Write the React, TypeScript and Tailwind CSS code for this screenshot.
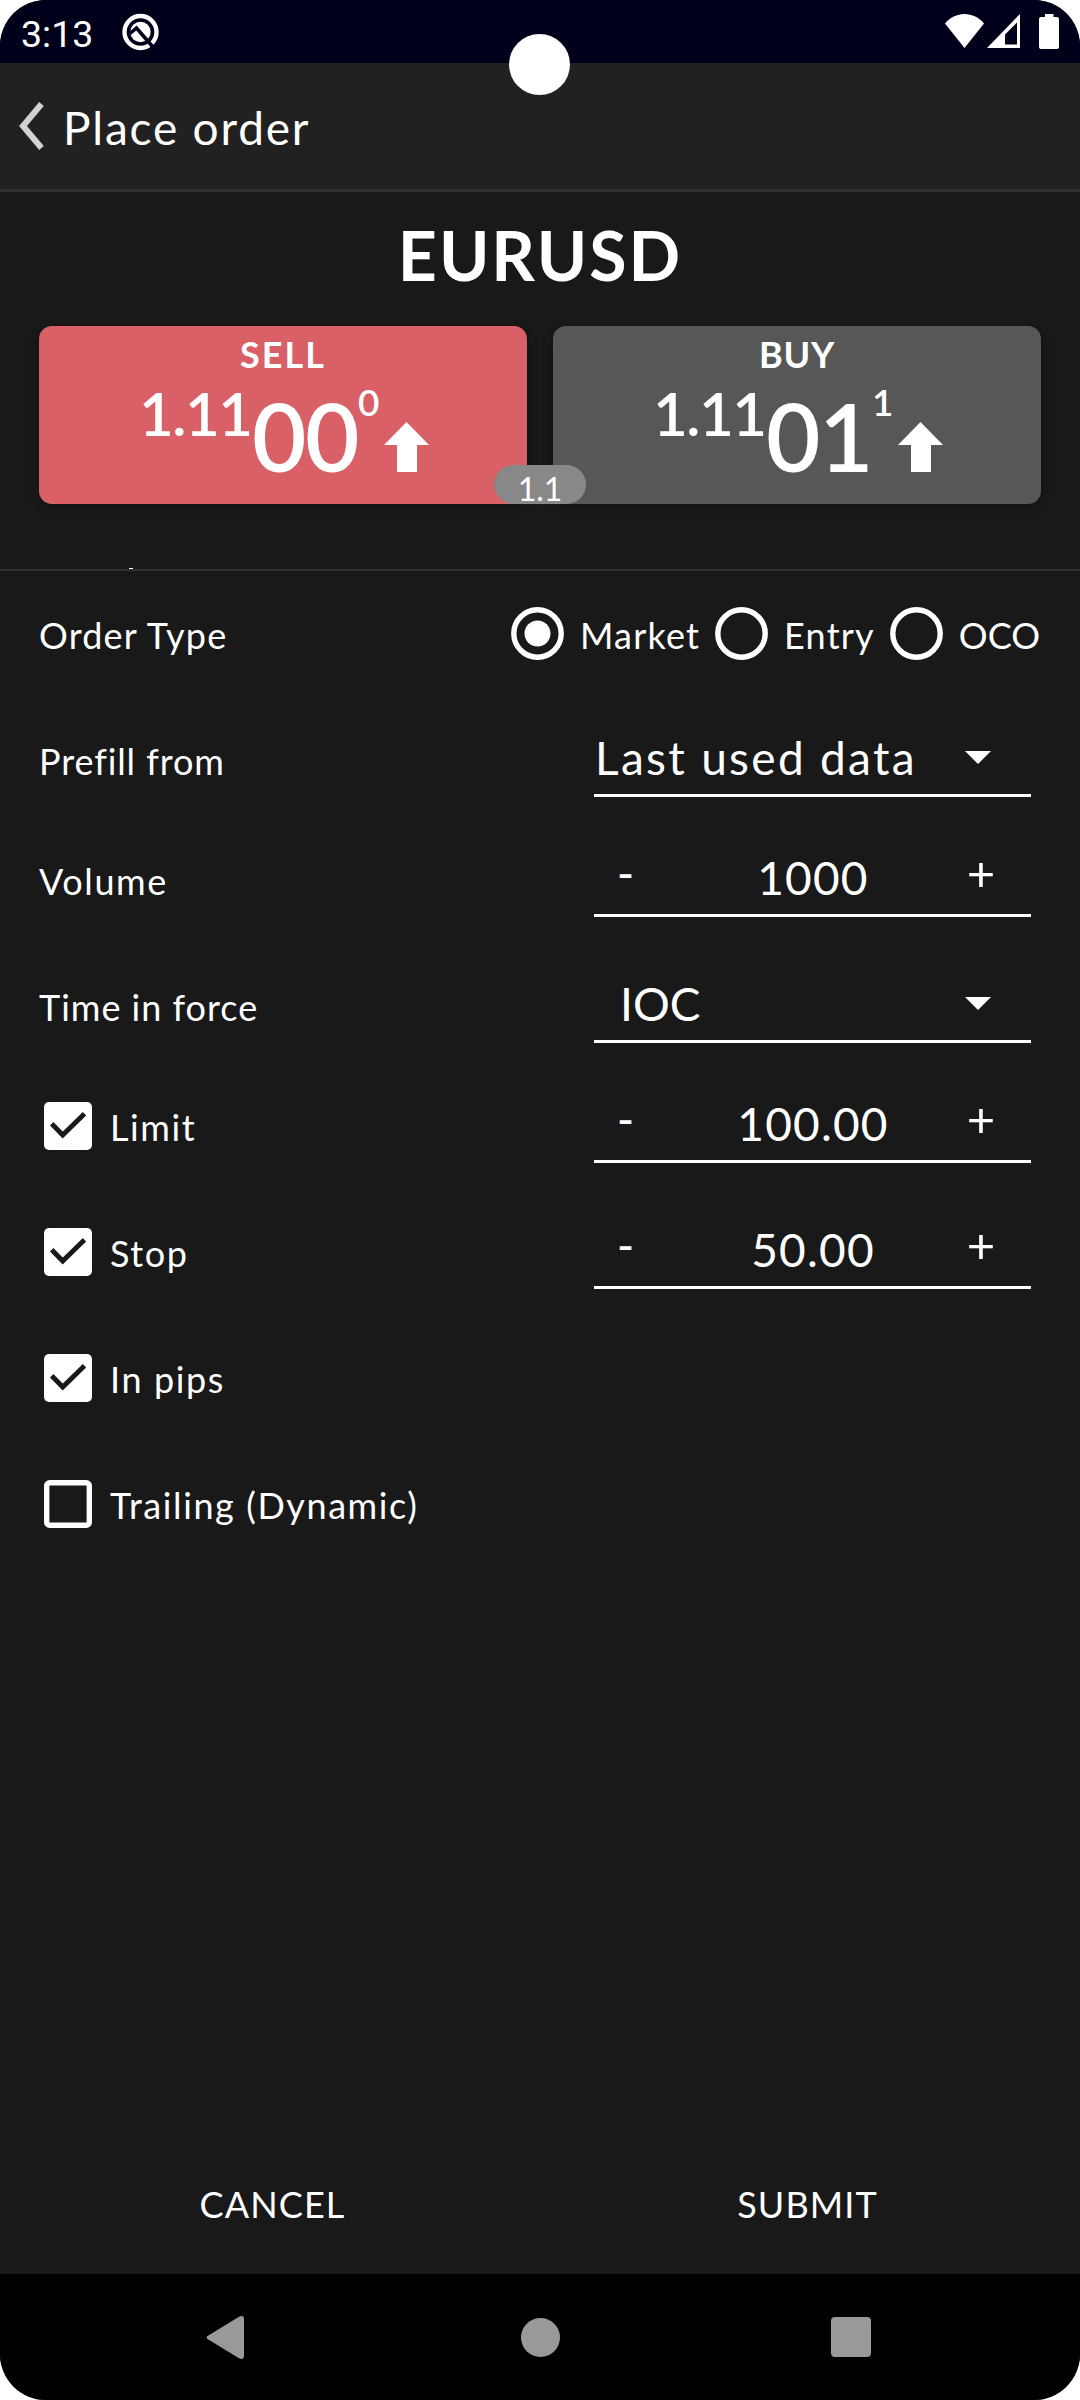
import { useState, type ReactNode } from "react";

function StatusBar() {
  return (
    <div className="flex h-[63px] shrink-0 items-start bg-[#00001a] pl-[21px] pr-[21px]">
      <span className="mt-[12px] w-[101px] font-[Roboto] text-[37.5px] leading-[44px]">
        3:13
      </span>
      <svg className="mt-[13px]" width="37" height="38" viewBox="0 0 37 38" fill="none" aria-hidden>
        <circle cx="18.5" cy="19" r="16" stroke="white" strokeWidth="4.4" />
        <circle cx="18.5" cy="19" r="10.2" fill="white" />
        <path d="M8 20.5 14.5 15 30.5 33.5" stroke="#00001a" strokeWidth="3.6" />
      </svg>
      <div className="ml-auto mt-[14px] flex items-start">
        <svg width="39" height="34" viewBox="0 0 39 34" fill="white" aria-hidden>
          <path d="M19.5 34 0 9.5C5 3.5 12 0 19.5 0S34 3.5 39 9.5Z" />
        </svg>
        <svg className="ml-[3px]" width="33" height="34" viewBox="0 0 33 34" aria-hidden>
          <path fill="white" fillRule="evenodd" d="M0 34 33 0v34H0Zm18-3.5h12V8.5L18 20.5Z" />
        </svg>
        <svg className="ml-[19px]" width="20" height="35" viewBox="0 0 20 35" fill="white" aria-hidden>
          <path d="M6 0h8.5v3H18a2 2 0 0 1 2 2v28a2 2 0 0 1-2 2H2a2 2 0 0 1-2-2V5a2 2 0 0 1 2-2h4Z" />
        </svg>
      </div>
    </div>
  );
}

function Header() {
  return (
    <header className="flex h-[129px] shrink-0 items-center border-b-[3px] border-[#303030] bg-[#212121] pl-[18px]">
      <svg width="27" height="48" viewBox="0 0 27 48" fill="none" aria-label="Back">
        <path d="M23.5 2 5 24l18.500 22" stroke="#d2d2d2" strokeWidth="6" />
      </svg>
      <h1 className="ml-[18px] mt-1 text-[46px] leading-[56px] tracking-[1.8px]">
        Place order
      </h1>
    </header>
  );
}

function PriceButton({
  side,
  pips,
  point,
  className,
}: {
  side: ReactNode;
  pips: string;
  point: string;
  className: string;
}) {
  return (
    <button
      type="button"
      className={`flex h-[178px] w-[488px] flex-col items-center rounded-[13px] pt-[6px] font-semibold shadow-[0_2px_10px_rgba(0,0,0,0.35)] ${className}`}
    >
      <span className="text-[36px] font-bold leading-[44px]">{side}</span>
      <span className="flex h-[100px] items-start self-start pl-[100px] text-left">
        <span className="mt-[1px] w-[113px] text-[60px] leading-[72px] tracking-[-1.5px]">1.11</span>
        <span className="mt-[4px] w-[106px] text-[94px] leading-[112px] tracking-[-1.5px]">{pips}</span>
        <span className="mt-[4px] w-[26px] text-[37px] leading-[44px]">{point}</span>
        <svg className="mt-[46px]" width="45" height="50" viewBox="0 0 45 50" fill="white" aria-hidden>
          <path d="M22.5 0 45 23H33v27H13V23H0Z" />
        </svg>
      </span>
    </button>
  );
}

function Radio({
  label,
  checked,
  onSelect,
}: {
  label: string;
  checked: boolean;
  onSelect: () => void;
}) {
  return (
    <button type="button" role="radio" aria-checked={checked} onClick={onSelect} className="flex items-center">
      <svg className="-mt-[3px]" width="53" height="53" viewBox="0 0 53 53" aria-hidden>
        <circle cx="26.5" cy="26.5" r="23.7" fill="none" stroke="white" strokeWidth="5.4" />
        {checked ? <circle cx="26.5" cy="26.5" r="13" fill="white" /> : null}
      </svg>
      <span className={`ml-[16px] ${label === "OCO" ? "" : "tracking-[1.2px]"}`}>{label}</span>
    </button>
  );
}

function Checkbox({ label, initial }: { label: string; initial: boolean }) {
  const [checked, setChecked] = useState(initial);
  return (
    <button
      type="button"
      role="checkbox"
      aria-checked={checked}
      onClick={() => setChecked((value) => !value)}
      className="ml-[5px] flex items-center"
    >
      <svg className="-mt-[2px]" width="48" height="48" viewBox="0 0 48 48" fill="none" aria-hidden>
        {checked ? (
          <>
            <rect width="48" height="48" rx="5" fill="white" />
            <path d="m7.7 21.8 11 11.2L40.5 11.7" stroke="#191919" strokeWidth="4.8" />
          </>
        ) : (
          <rect x="2.7" y="2.7" width="42.6" height="42.6" rx="3" stroke="white" strokeWidth="5.4" />
        )}
      </svg>
      <span className="ml-[18px] tracking-[1.6px]">{label}</span>
    </button>
  );
}

function Row({
  label,
  spaced = false,
  children,
}: {
  label: ReactNode;
  spaced?: boolean;
  children?: ReactNode;
}) {
  return (
    <div className={`flex h-[120px] items-center justify-between pl-[39px] ${spaced ? "mb-[6px]" : ""}`}>
      {label}
      {children}
    </div>
  );
}

const field =
  "mr-[49px] flex h-[96px] w-[437px] items-center self-start border-b-[3px] border-white pt-[19px] text-[46px] leading-[56px]";

function SelectField({ value, className }: { value: string; className: string }) {
  return (
    <div className={`${field} justify-between pr-[40px] ${className}`}>
      <span className="mt-[2px]">{value}</span>
      <svg width="26" height="13" viewBox="0 0 26 13" fill="white" aria-hidden>
        <path d="M0 0h26L13 13Z" />
      </svg>
    </div>
  );
}

function StepperField({ value }: { value: string }) {
  return (
    <div className={field}>
      <button type="button" className="-mt-2 w-[63px] text-center font-medium">-</button>
      <span className="mt-[2px] w-[312px] text-center tracking-[1.2px]">{value}</span>
      <button type="button" className="-mt-[11px] w-[24px] text-[49px]">
        <span className="-mx-3">+</span>
      </button>
    </div>
  );
}

export default function App() {
  const [orderType, setOrderType] = useState("Market");

  return (
    <div className="h-[2400px] w-[1080px] bg-white">
      <div className="relative flex h-full flex-col overflow-hidden rounded-[46px] bg-[#191919] font-[Lato,sans-serif] text-white">
        <StatusBar />
        <Header />
        {/* camera cutout */}
        <div className="absolute left-[509px] top-[34px] size-[61px] rounded-full bg-white" />

        <section className="relative flex h-[379px] shrink-0 flex-col border-b-2 border-[#303030]">
          <h2 className="mt-[22px] h-[112px] text-center text-[68px] font-bold leading-[82px] tracking-[2px]">
            EURUSD
          </h2>
          <div className="relative flex justify-between px-[39px]">
            <PriceButton
              side={<span className="tracking-[2px]">SELL</span>}
              pips="00"
              point="0"
              className="bg-[#d86066]"
            />
            <PriceButton
              side={<span className="tracking-[0.8px]">BUY</span>}
              pips="01"
              point="1"
              className="bg-[#575757]"
            />
            <span className="absolute bottom-0 left-[494px] h-[39px] w-[92px] rounded-full bg-[#888888] pt-[5px] text-center text-[32px] leading-[38px]">
              1.1
            </span>
          </div>
          <span className="absolute bottom-0 left-[129px] h-px w-[4px] bg-white" />
        </section>

        <form className="flex flex-col pt-[4px] text-[36px] leading-[44px]">
          <Row label={<span className="tracking-[1.2px]">Order Type</span>} spaced>
            <div role="radiogroup" className="mr-[40px] flex gap-[15px]">
              {["Market", "Entry", "OCO"].map((type) => (
                <Radio
                  key={type}
                  label={type}
                  checked={orderType === type}
                  onSelect={() => setOrderType(type)}
                />
              ))}
            </div>
          </Row>
          <Row label={<span className="tracking-[0.9px]">Prefill from</span>}>
            <SelectField value="Last used data" className="pl-px tracking-[2.3px]" />
          </Row>
          <Row label={<span className="tracking-[1.6px]">Volume</span>} spaced>
            <StepperField value="1000" />
          </Row>
          <Row label={<span className="tracking-[1px]">Time in force</span>}>
            <SelectField value="IOC" className="pl-[26px]" />
          </Row>
          <Row label={<Checkbox label="Limit" initial />} spaced>
            <StepperField value="100.00" />
          </Row>
          <Row label={<Checkbox label="Stop" initial />} spaced>
            <StepperField value="50.00" />
          </Row>
          <Row label={<Checkbox label="In pips" initial />} spaced />
          <Row label={<Checkbox label="Trailing (Dynamic)" initial={false} />} />
        </form>

        <div className="mt-auto flex h-[140px] shrink-0 text-[36px] leading-[44px] tracking-[1.1px]">
          <button type="button" className="w-[545px]">CANCEL</button>
          <button type="button" className="w-[525px]">SUBMIT</button>
        </div>

        <nav className="flex h-[126px] shrink-0 items-center bg-black pl-[206px] text-[#999999]">
          <svg width="38" height="43" viewBox="0 0 38 43" fill="currentColor" aria-label="Back">
            <path d="M1.5 20 33 .8Q38-1.5 38 3.5v36q0 5-5 2.7L1.5 23Q-.5 21.5 1.5 20Z" />
          </svg>
          <span className="ml-[277px] size-[39px] rounded-full bg-[#999999]" />
          <span className="ml-[271px] size-[40px] rounded-[4px] bg-[#999999]" />
        </nav>
      </div>
    </div>
  );
}
